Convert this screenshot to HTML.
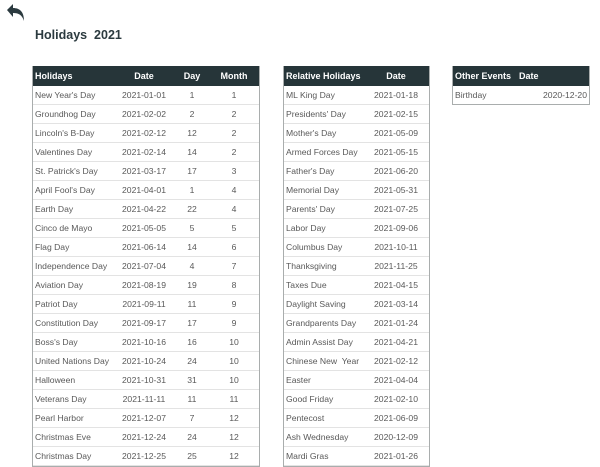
<!DOCTYPE html>
<html><head><style>
body{margin:0;width:600px;height:458px;overflow:hidden;background:#fff;font-family:"Liberation Sans",sans-serif;position:relative}
.t{position:absolute;top:66px;border:1px solid #a9adad;border-top:none;background:#fff}
.h{background:#263539;color:#fff;font-weight:bold;font-size:9px;height:20px;display:flex;align-items:center}
.r{height:18px;border-bottom:1px solid #e3e3e3;display:flex;align-items:center;font-size:8.6px;color:#595959}
.c{padding-left:2px;box-sizing:border-box}
.m{text-align:center}
h1{position:absolute;left:35px;top:28px;margin:0;font-size:12.5px;font-weight:bold;color:#2b3a3f}
</style></head><body>
<svg style="position:absolute;left:6px;top:4px" width="20" height="18" viewBox="0 0 20 18"><path d="M1 6 L7 0 L7 4 C14 4 18 8 18 17 C16 11 13 9 7 9 L7 13 Z" fill="#2b3a3f"/></svg>
<h1>Holidays&nbsp; 2021</h1>
<div class="t" style="left:32px;width:226px">
<div class="h"><span class="c" style="width:80px">Holidays</span><span class="m" style="width:62px">Date</span><span class="m" style="width:34px">Day</span><span class="m" style="width:50px">Month</span></div>
<div id="a"></div>
</div>
<div class="t" style="left:283px;width:145px">
<div class="h"><span class="c" style="width:90px">Relative Holidays</span><span class="m" style="width:44px">Date</span></div>
<div id="b"></div>
</div>
<div class="t" style="left:452px;width:136px">
<div class="h"><span class="c" style="width:66px">Other Events</span><span style="width:40px">Date</span></div>
<div class="r" style="border-bottom:none"><span class="c" style="width:90px">Birthday</span><span style="width:44px;text-align:right">2020-12-20</span></div>
</div>
<script>
var A=[["New Year's Day","2021-01-01",1,1],["Groundhog Day","2021-02-02",2,2],["Lincoln's B-Day","2021-02-12",12,2],["Valentines Day","2021-02-14",14,2],["St. Patrick's Day","2021-03-17",17,3],["April Fool's Day","2021-04-01",1,4],["Earth Day","2021-04-22",22,4],["Cinco de Mayo","2021-05-05",5,5],["Flag Day","2021-06-14",14,6],["Independence Day","2021-07-04",4,7],["Aviation Day","2021-08-19",19,8],["Patriot Day","2021-09-11",11,9],["Constitution Day","2021-09-17",17,9],["Boss's Day","2021-10-16",16,10],["United Nations Day","2021-10-24",24,10],["Halloween","2021-10-31",31,10],["Veterans Day","2021-11-11",11,11],["Pearl Harbor","2021-12-07",7,12],["Christmas Eve","2021-12-24",24,12],["Christmas Day","2021-12-25",25,12]];
var h="";A.forEach(function(x){h+='<div class="r"><span class="c" style="width:80px;white-space:nowrap;overflow:hidden">'+x[0]+'</span><span class="m" style="width:62px">'+x[1]+'</span><span class="m" style="width:34px">'+x[2]+'</span><span class="m" style="width:50px">'+x[3]+'</span></div>'});
document.getElementById("a").innerHTML=h;h="";
B=[["ML King Day","2021-01-18"],["Presidents' Day","2021-02-15"],["Mother's Day","2021-05-09"],["Armed Forces Day","2021-05-15"],["Father's Day","2021-06-20"],["Memorial Day","2021-05-31"],["Parents' Day","2021-07-25"],["Labor Day","2021-09-06"],["Columbus Day","2021-10-11"],["Thanksgiving","2021-11-25"],["Taxes Due","2021-04-15"],["Daylight Saving","2021-03-14"],["Grandparents Day","2021-01-24"],["Admin Assist Day","2021-04-21"],["Chinese New  Year","2021-02-12"],["Easter","2021-04-04"],["Good Friday","2021-02-10"],["Pentecost","2021-06-09"],["Ash Wednesday","2020-12-09"],["Mardi Gras","2021-01-26"]];
B.forEach(function(x){h+='<div class="r"><span class="c" style="width:90px;white-space:pre">'+x[0]+'</span><span class="m" style="width:44px">'+x[1]+'</span></div>'});
document.getElementById("b").innerHTML=h;
</script>
</body></html>
